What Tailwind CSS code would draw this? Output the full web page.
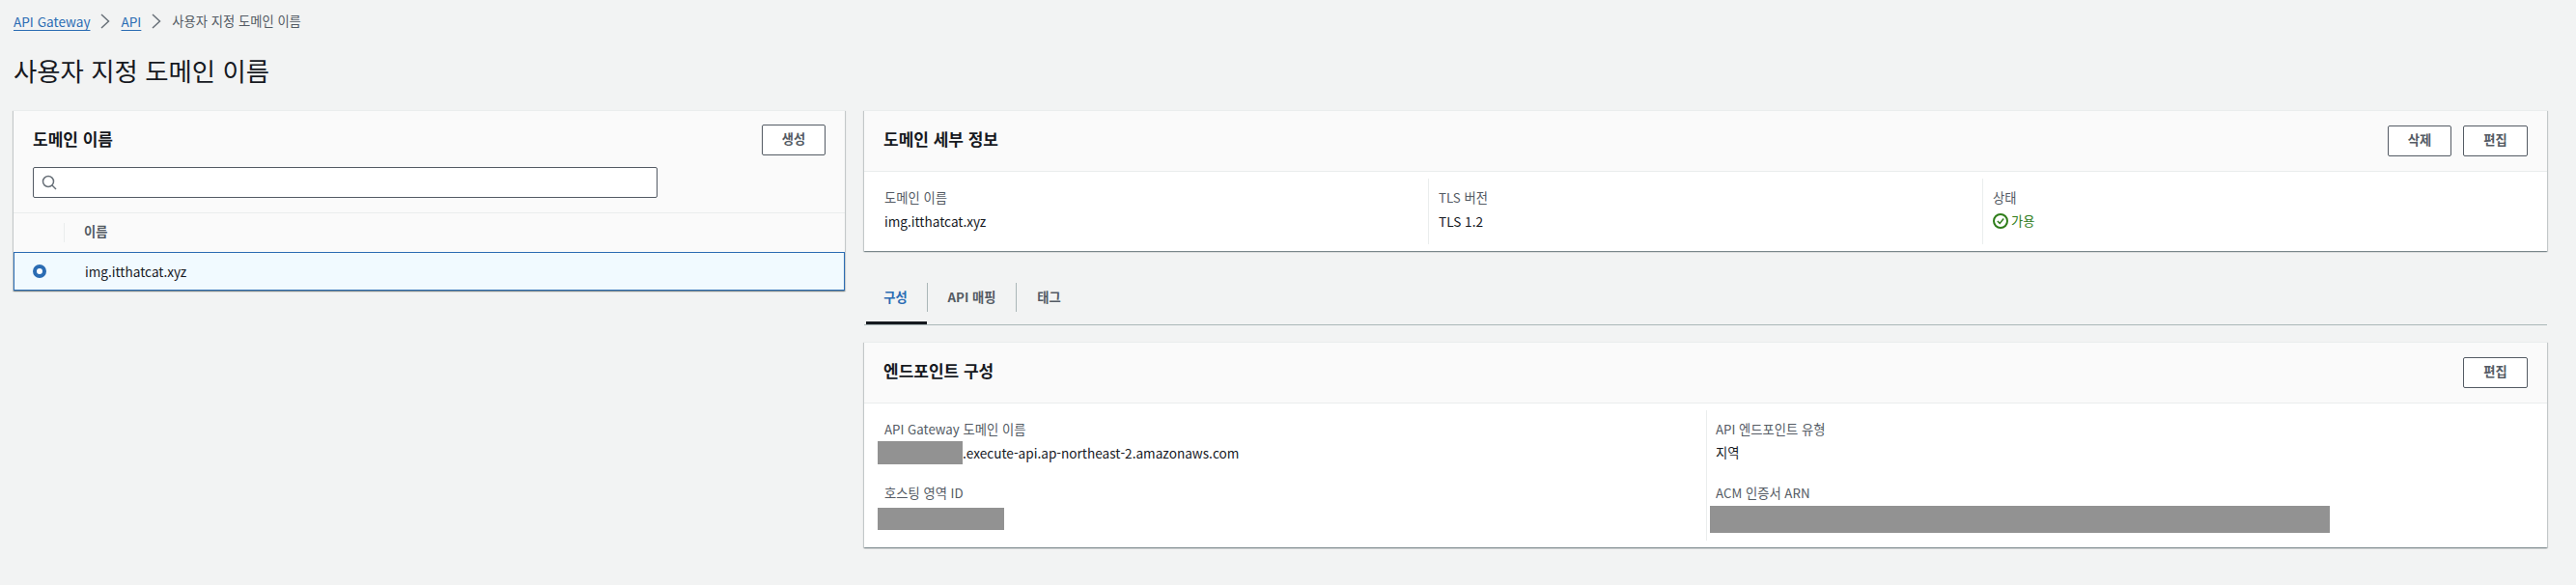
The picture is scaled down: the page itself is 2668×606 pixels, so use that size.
<!DOCTYPE html>
<html lang="ko">
<head>
    <meta charset="UTF-8">
    <title>사용자 지정 도메인 이름</title>
    <script src="https://cdn.jsdelivr.net/npm/@tailwindcss/browser@4"></script>
</head>
<body class="bg-[#f2f3f3] text-[#16191f] text-[13.3px] leading-[20px] font-['Noto_Sans_CJK_KR','Noto_Sans',sans-serif] h-[606px] overflow-hidden">
    <div class="pl-[14px] pr-[30px]">
        <!-- Breadcrumbs -->
        <nav class="h-[44px] flex items-center text-[#545b64]">
            <a class="text-[#2b6cb3] text-[13.6px] underline underline-offset-[3px]">API Gateway</a>
            <svg class="w-[16px] h-[16px] mx-[8px] text-[#687078]" viewBox="0 0 16 16" fill="none" stroke="currentColor" stroke-width="1.5"><path d="M4 1 L11.5 8 L4 15"/></svg>
            <a class="text-[#2b6cb3] text-[13.6px] underline underline-offset-[3px]">API</a>
            <svg class="w-[16px] h-[16px] mx-[8px] text-[#687078]" viewBox="0 0 16 16" fill="none" stroke="currentColor" stroke-width="1.5"><path d="M4 1 L11.5 8 L4 15"/></svg>
            <span>사용자 지정 도메인 이름</span>
        </nav>
        <h1 class="h-[70px] pt-[11px] text-[26.4px] leading-[36px] font-normal">사용자 지정 도메인 이름</h1>

        <div class="grid grid-cols-[861px_1743px] gap-x-[20px] items-start">
            <!-- Domain list -->
            <section class="bg-[#fafafa] border-t border-[#eaeded] shadow-[0_1px_1px_0_rgba(0,28,36,0.3),1px_1px_1px_0_rgba(0,28,36,0.15),-1px_1px_1px_0_rgba(0,28,36,0.15)]">
                <div class="h-[106px] px-[20px] pt-[14px] border-b border-[#eaeded]">
                    <div class="flex justify-between items-center h-[32px]">
                        <h2 class="text-[17px] font-bold pb-[2px]">도메인 이름</h2>
                        <button class="w-[66px] h-[32px] border border-[#545b64] rounded-[2px] bg-white font-bold text-[#545b64] pb-[2px]">생성</button>
                    </div>
                    <div class="mt-[12px] w-[647px] h-[32px] border border-[#545b64] rounded-[2px] bg-white flex items-center pl-[8px]">
                        <svg class="w-[16px] h-[16px] text-[#687078]" viewBox="0 0 16 16" fill="none" stroke="currentColor" stroke-width="1.5"><circle cx="7" cy="7" r="5.5"/><path d="M11 11 L15 15"/></svg>
                    </div>
                </div>
                <div class="h-[40px] flex items-center text-[#545b64]">
                    <div class="w-[53px] h-[20px] border-r border-[#eaeded]"></div>
                    <div class="pl-[20px] font-bold pb-[2px]">이름</div>
                </div>
                <div class="h-[40px] flex items-center bg-[#f1faff] border border-[#2b6cb3]">
                    <div class="w-[53px] pl-[19px]">
                        <div class="w-[14px] h-[14px] rounded-full border-[4px] border-[#2b6cb3] bg-white"></div>
                    </div>
                    <div class="pl-[20px] text-[13.6px]">img.itthatcat.xyz</div>
                </div>
            </section>

            <div>
                <!-- Domain details -->
                <section class="bg-white border-t border-[#eaeded] shadow-[0_1px_1px_0_rgba(0,28,36,0.3),1px_1px_1px_0_rgba(0,28,36,0.15),-1px_1px_1px_0_rgba(0,28,36,0.15)]">
                    <div class="h-[63px] px-[20px] bg-[#fafafa] border-b border-[#eaeded] flex justify-between items-center">
                        <h2 class="text-[17px] font-bold pb-[4px]">도메인 세부 정보</h2>
                        <div class="flex gap-[12px]">
                            <button class="w-[66px] h-[32px] border border-[#545b64] rounded-[2px] bg-white font-bold text-[#545b64] pb-[2px]">삭제</button>
                            <button class="w-[67px] h-[32px] border border-[#545b64] rounded-[2px] bg-white font-bold text-[#545b64] pb-[2px]">편집</button>
                        </div>
                    </div>
                    <div class="grid grid-cols-[584px_574px_1fr] h-[82px] py-[7px]">
                        <div class="pl-[21px] pt-[10px]">
                            <div class="text-[#545b64]">도메인 이름</div>
                            <div class="mt-[4px] text-[13.6px]">img.itthatcat.xyz</div>
                        </div>
                        <div class="border-l border-[#eaeded] pl-[10px] pt-[10px]">
                            <div class="text-[#545b64]">TLS 버전</div>
                            <div class="mt-[4px] text-[13.6px]">TLS 1.2</div>
                        </div>
                        <div class="border-l border-[#eaeded] pl-[10px] pt-[10px]">
                            <div class="text-[#545b64]">상태</div>
                            <div class="mt-[4px] flex items-center gap-[3px] text-[#2f7d1a]">
                                <svg class="w-[16px] h-[16px]" viewBox="0 0 16 16" fill="none" stroke="currentColor" stroke-width="2"><circle cx="8" cy="8" r="7"/><path stroke-width="1.5" d="M4.8 8 L7.2 10.4 L11.2 5.6"/></svg>
                                <span>가용</span>
                            </div>
                        </div>
                    </div>
                </section>

                <!-- Tabs -->
                <div class="mt-[29px] h-[48px] flex border-b border-[#aab7b8] relative font-bold text-[#545b64]">
                    <div class="flex items-start pt-[4px] h-[48px]">
                        <div class="relative w-[66px] h-[30px] flex items-center justify-center text-[#2b6cb3] border-r border-[#aab7b8]">
                            구성
                            <div class="absolute left-[2px] right-0 top-[40px] h-[3px] bg-[#16191f]"></div>
                        </div>
                        <div class="w-[92px] h-[30px] flex items-center justify-center border-r border-[#aab7b8]">API 매핑</div>
                        <div class="w-[67px] h-[30px] flex items-center justify-center">태그</div>
                    </div>
                </div>

                <!-- Endpoint config -->
                <section class="mt-[17px] bg-white border-t border-[#eaeded] shadow-[0_1px_1px_0_rgba(0,28,36,0.3),1px_1px_1px_0_rgba(0,28,36,0.15),-1px_1px_1px_0_rgba(0,28,36,0.15)]">
                    <div class="h-[63px] px-[20px] bg-[#fafafa] border-b border-[#eaeded] flex justify-between items-center">
                        <h2 class="text-[17px] font-bold pb-[4px]">엔드포인트 구성</h2>
                        <button class="w-[67px] h-[32px] border border-[#545b64] rounded-[2px] bg-white font-bold text-[#545b64] pb-[2px]">편집</button>
                    </div>
                    <div class="grid grid-cols-[872px_1fr] h-[149px] py-[7px]">
                        <div class="pl-[21px] pt-[10px]">
                            <div class="text-[#545b64]">API Gateway 도메인 이름</div>
                            <div class="flex items-center h-[24px] -ml-[7px] mt-[2px]">
                                <div class="w-[88px] h-[24px] bg-[#929292]"></div>
                                <span class="text-[13.6px]">.execute-api.ap-northeast-2.amazonaws.com</span>
                            </div>
                            <div class="text-[#545b64] mt-[20px]">호스팅 영역 ID</div>
                            <div class="w-[131px] h-[23px] bg-[#929292] -ml-[7px] mt-[5px]"></div>
                        </div>
                        <div class="border-l border-[#eaeded] pl-[9px] pt-[10px]">
                            <div class="text-[#545b64]">API 엔드포인트 유형</div>
                            <div class="mt-[4px]">지역</div>
                            <div class="text-[#545b64] mt-[22px]">ACM 인증서 ARN</div>
                            <div class="w-[642px] h-[28px] bg-[#929292] -ml-[6px] mt-[3px]"></div>
                        </div>
                    </div>
                </section>
            </div>
        </div>
    </div>
</body>
</html>
